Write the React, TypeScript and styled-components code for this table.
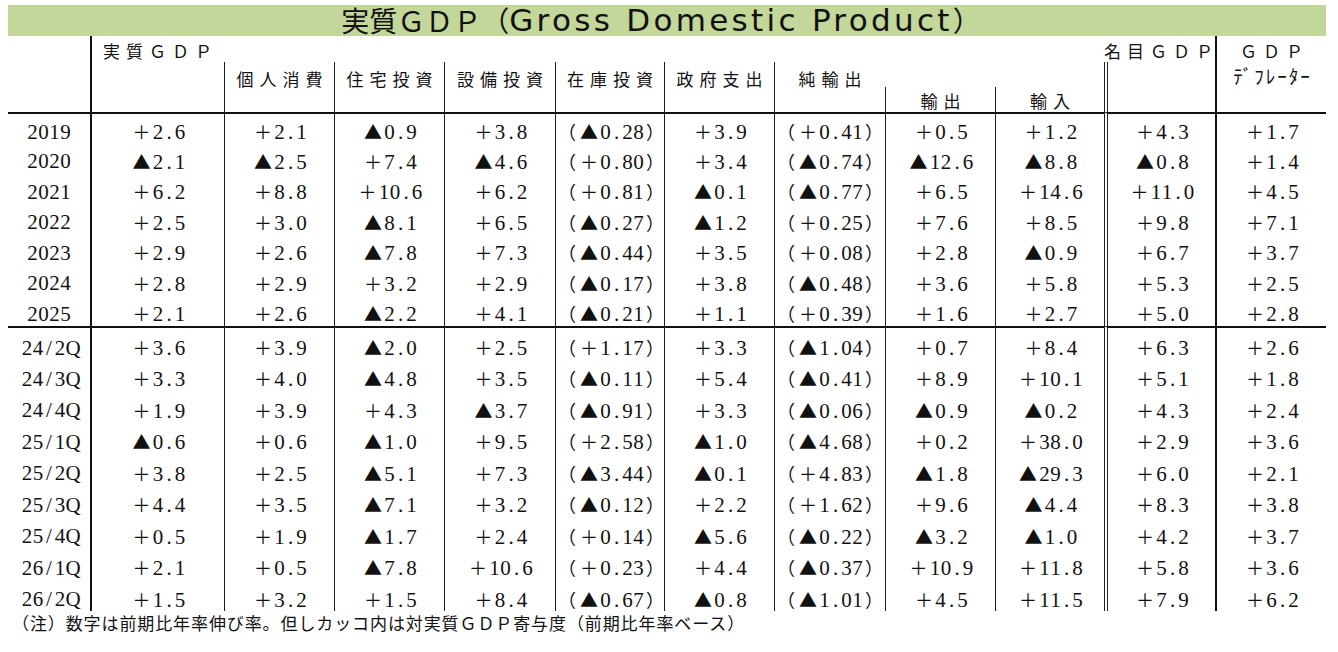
import React from "react";
import styled, { createGlobalStyle } from "styled-components";

const GlobalStyle = createGlobalStyle`
  html, body {
    margin: 0;
    padding: 0;
    background: #ffffff;
  }
  body {
    font-family: "Noto Sans CJK JP", sans-serif;
    color: #111111;
  }
`;

type Edge = "none" | "thin" | "thick" | "double";

const edges: Record<Edge, string> = {
  none: "none",
  thin: "1px solid #1c1c1c",
  thick: "2px solid #111111",
  double: "4px double #222222",
};

const Page = styled.div`
  width: 1338px;
  padding: 5px 12px 0 8px;
  box-sizing: border-box;
`;

const TitleBar = styled.div`
  height: 31px;
  background: #c4d79b;
  display: flex;
  justify-content: center;
  align-items: center;
  padding-right: 12px;
  white-space: nowrap;
  line-height: 31px;
`;

const TitleJa = styled.span`
  font-family: "Noto Sans CJK JP", sans-serif;
  font-size: 28px;
`;

const TitleEn = styled.span`
  font-family: "DejaVu Sans", sans-serif;
  font-size: 31px;
  letter-spacing: 3.3px;
`;

const Sheet = styled.table`
  width: 1318px;
  table-layout: fixed;
  border-collapse: separate;
  border-spacing: 0;
`;

const Head = styled.td<{ $edge?: Edge; $align?: "left" | "center"; $pad?: number; $indent?: number }>`
  border-left: ${(p) => edges[p.$edge ?? "none"]};
  padding: ${(p) => p.$pad ?? 0}px 0 0 ${(p) => p.$indent ?? 0}px;
  text-align: ${(p) => p.$align ?? "center"};
  vertical-align: top;
  white-space: nowrap;
  line-height: 20px;
`;

const Label = styled.span`
  font-family: "Noto Sans CJK JP", sans-serif;
  font-size: 17px;
  letter-spacing: 6px;
`;

const CenteredLabel = styled(Label)`
  padding-left: 6px;
`;

const SmallKana = styled.div`
  font-family: "Noto Sans CJK JP", sans-serif;
  font-size: 19px;
  letter-spacing: 2px;
  padding-left: 2px;
  margin-top: 5px;
`;

const HeadRow = styled.tr<{ $h: number }>`
  height: ${(p) => p.$h}px;
`;

const DataRow = styled.tr<{ $h: number }>`
  height: ${(p) => p.$h}px;
`;

const Cell = styled.td<{ $edge: Edge; $rule?: boolean; $lift: number }>`
  border-left: ${(p) => edges[p.$edge]};
  border-top: ${(p) => (p.$rule ? "2px solid #111111" : "none")};
  padding: ${(p) => p.$lift}px 0 0;
  text-align: center;
  vertical-align: middle;
  white-space: nowrap;
  line-height: 22px;
`;

const Narrow = styled.span`
  display: inline-block;
  width: 11px;
  text-align: center;
  font-family: "Liberation Serif", serif;
  font-size: 21px;
`;

const Wide = styled.span`
  display: inline-block;
  width: 22px;
  text-align: center;
  font-family: "Noto Sans CJK JP", sans-serif;
  font-size: 18px;
`;

const FootNote = styled.div`
  font-family: "Noto Sans CJK JP", sans-serif;
  font-size: 17px;
  letter-spacing: 0.9px;
  line-height: 22px;
  padding: 1px 0 0 4px;
  white-space: nowrap;
`;

const Glyphs = ({ value }: { value: string }) => (
  <>
    {Array.from(value).map((c, i) =>
      /[^\x00-\x7f]/.test(c) ? <Wide key={i}>{c}</Wide> : <Narrow key={i}>{c}</Narrow>
    )}
  </>
);

const colWidths = [82, 134, 110, 110, 111, 109, 110, 111, 110, 109, 111, 111];
const bodyEdges: Edge[] = [
  "none", "thick", "thin", "thin", "thin", "thin", "thin", "thin", "thin", "thin", "double", "thick",
];

const annual: string[][] = [
  ["2019", "＋2.6", "＋2.1", "▲0.9", "＋3.8", "（▲0.28）", "＋3.9", "（＋0.41）", "＋0.5", "＋1.2", "＋4.3", "＋1.7"],
  ["2020", "▲2.1", "▲2.5", "＋7.4", "▲4.6", "（＋0.80）", "＋3.4", "（▲0.74）", "▲12.6", "▲8.8", "▲0.8", "＋1.4"],
  ["2021", "＋6.2", "＋8.8", "＋10.6", "＋6.2", "（＋0.81）", "▲0.1", "（▲0.77）", "＋6.5", "＋14.6", "＋11.0", "＋4.5"],
  ["2022", "＋2.5", "＋3.0", "▲8.1", "＋6.5", "（▲0.27）", "▲1.2", "（＋0.25）", "＋7.6", "＋8.5", "＋9.8", "＋7.1"],
  ["2023", "＋2.9", "＋2.6", "▲7.8", "＋7.3", "（▲0.44）", "＋3.5", "（＋0.08）", "＋2.8", "▲0.9", "＋6.7", "＋3.7"],
  ["2024", "＋2.8", "＋2.9", "＋3.2", "＋2.9", "（▲0.17）", "＋3.8", "（▲0.48）", "＋3.6", "＋5.8", "＋5.3", "＋2.5"],
  ["2025", "＋2.1", "＋2.6", "▲2.2", "＋4.1", "（▲0.21）", "＋1.1", "（＋0.39）", "＋1.6", "＋2.7", "＋5.0", "＋2.8"],
];

const quarterly: string[][] = [
  ["24/2Q", "＋3.6", "＋3.9", "▲2.0", "＋2.5", "（＋1.17）", "＋3.3", "（▲1.04）", "＋0.7", "＋8.4", "＋6.3", "＋2.6"],
  ["24/3Q", "＋3.3", "＋4.0", "▲4.8", "＋3.5", "（▲0.11）", "＋5.4", "（▲0.41）", "＋8.9", "＋10.1", "＋5.1", "＋1.8"],
  ["24/4Q", "＋1.9", "＋3.9", "＋4.3", "▲3.7", "（▲0.91）", "＋3.3", "（▲0.06）", "▲0.9", "▲0.2", "＋4.3", "＋2.4"],
  ["25/1Q", "▲0.6", "＋0.6", "▲1.0", "＋9.5", "（＋2.58）", "▲1.0", "（▲4.68）", "＋0.2", "＋38.0", "＋2.9", "＋3.6"],
  ["25/2Q", "＋3.8", "＋2.5", "▲5.1", "＋7.3", "（▲3.44）", "▲0.1", "（＋4.83）", "▲1.8", "▲29.3", "＋6.0", "＋2.1"],
  ["25/3Q", "＋4.4", "＋3.5", "▲7.1", "＋3.2", "（▲0.12）", "＋2.2", "（＋1.62）", "＋9.6", "▲4.4", "＋8.3", "＋3.8"],
  ["25/4Q", "＋0.5", "＋1.9", "▲1.7", "＋2.4", "（＋0.14）", "▲5.6", "（▲0.22）", "▲3.2", "▲1.0", "＋4.2", "＋3.7"],
  ["26/1Q", "＋2.1", "＋0.5", "▲7.8", "＋10.6", "（＋0.23）", "＋4.4", "（▲0.37）", "＋10.9", "＋11.8", "＋5.8", "＋3.6"],
  ["26/2Q", "＋1.5", "＋3.2", "＋1.5", "＋8.4", "（▲0.67）", "▲0.8", "（▲1.01）", "＋4.5", "＋11.5", "＋7.9", "＋6.2"],
];

const components = ["個人消費", "住宅投資", "設備投資", "在庫投資", "政府支出"];

const Section = ({ rows, height, lift }: { rows: string[][]; height: number; lift: number }) => (
  <>
    {rows.map((row, r) => (
      <DataRow key={row[0]} $h={height}>
        {row.map((v, c) => (
          <Cell key={c} $edge={bodyEdges[c]} $rule={r === 0} $lift={lift}>
            <Glyphs value={v} />
          </Cell>
        ))}
      </DataRow>
    ))}
  </>
);

export default function App() {
  return (
    <Page>
      <GlobalStyle />
      <TitleBar>
        <TitleJa>実質ＧＤＰ（</TitleJa>
        <TitleEn>Gross Domestic Product</TitleEn>
        <TitleJa>）</TitleJa>
      </TitleBar>
      <Sheet>
        <colgroup>
          {colWidths.map((w, i) => (
            <col key={i} style={{ width: w }} />
          ))}
        </colgroup>
        <thead>
          <HeadRow $h={26}>
            <Head rowSpan={3} />
            <Head colSpan={9} $edge="thick" $align="left" $pad={5} $indent={11}>
              <Label>実質ＧＤＰ</Label>
            </Head>
            <Head $align="left" $pad={5}>
              <Label>名目ＧＤＰ</Label>
            </Head>
            <Head rowSpan={3} $edge="thick" $pad={5}>
              <CenteredLabel>ＧＤＰ</CenteredLabel>
              <SmallKana>ﾃﾞﾌﾚｰﾀｰ</SmallKana>
            </Head>
          </HeadRow>
          <HeadRow $h={25}>
            <Head rowSpan={2} $edge="thick" />
            {components.map((name) => (
              <Head key={name} rowSpan={2} $edge="thin" $pad={7}>
                <CenteredLabel>{name}</CenteredLabel>
              </Head>
            ))}
            <Head rowSpan={2} $edge="thin" $pad={7}>
              <CenteredLabel>純輸出</CenteredLabel>
            </Head>
            <Head colSpan={2} />
            <Head rowSpan={2} $edge="double" />
          </HeadRow>
          <HeadRow $h={25}>
            <Head $edge="thin" $pad={4}>
              <CenteredLabel>輸出</CenteredLabel>
            </Head>
            <Head $edge="thin" $pad={4}>
              <CenteredLabel>輸入</CenteredLabel>
            </Head>
          </HeadRow>
        </thead>
        <tbody>
          <Section rows={annual} height={30.5} lift={6} />
          <Section rows={quarterly} height={31.5} lift={8} />
        </tbody>
      </Sheet>
      <FootNote>（注）数字は前期比年率伸び率。但しカッコ内は対実質ＧＤＰ寄与度（前期比年率ベース）</FootNote>
    </Page>
  );
}
